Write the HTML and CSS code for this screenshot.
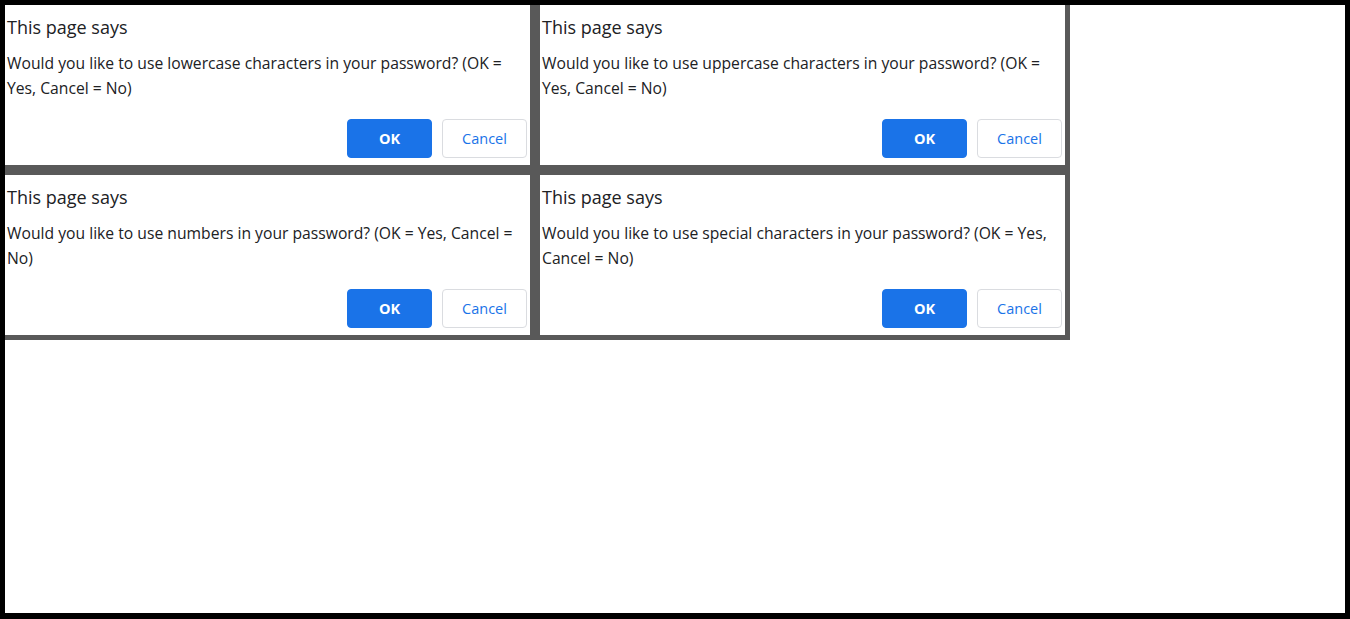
FILE: index.html
```html
<!DOCTYPE html>
<html>
<head>
<meta charset="utf-8">
<link rel="stylesheet" href="styles.css">
</head>
<body>
<div class="grid">
  <div class="dialog">
    <div class="title">This page says</div>
    <div class="msg">Would you like to use lowercase characters in your password? (OK = Yes, Cancel = No)</div>
    <div class="actions"><button class="btn ok">OK</button><button class="btn cancel">Cancel</button></div>
  </div>
  <div class="dialog">
    <div class="title">This page says</div>
    <div class="msg">Would you like to use uppercase characters in your password? (OK = Yes, Cancel = No)</div>
    <div class="actions"><button class="btn ok">OK</button><button class="btn cancel">Cancel</button></div>
  </div>
  <div class="dialog">
    <div class="title">This page says</div>
    <div class="msg">Would you like to use numbers in your password? (OK = Yes, Cancel = No)</div>
    <div class="actions"><button class="btn ok">OK</button><button class="btn cancel">Cancel</button></div>
  </div>
  <div class="dialog">
    <div class="title">This page says</div>
    <div class="msg">Would you like to use special characters in your password? (OK = Yes, Cancel = No)</div>
    <div class="actions"><button class="btn ok">OK</button><button class="btn cancel">Cancel</button></div>
  </div>
</div>
</body>
</html>
```
FILE: styles.css
```css
html, body {
  margin: 0;
  padding: 0;
}
body {
  box-sizing: border-box;
  width: 1350px;
  height: 619px;
  border: 5px solid #000;
  border-bottom-width: 6px;
  background: #fff;
  font-family: "Open Sans", "Noto Sans", sans-serif;
  color: #202124;
}
.grid {
  display: grid;
  grid-template-columns: 525px 525px;
  grid-auto-rows: 160px;
  gap: 10px;
  padding: 0 5px 5px 0;
  width: fit-content;
  background: #595959;
}
.dialog {
  background: #fff;
  display: flex;
  flex-direction: column;
  padding: 8px 3px 7px 2px;
}
.title {
  font-size: 18px;
  line-height: 28px;
}
.msg {
  margin-top: 10px;
  font-size: 15.7px;
  line-height: 25px;
}
.actions {
  margin-top: auto;
  display: flex;
  justify-content: flex-end;
  gap: 10px;
}
.btn {
  width: 85px;
  height: 39px;
  border-radius: 4px;
  font-family: "Open Sans", "Noto Sans", sans-serif;
  font-size: 14.5px;
  cursor: pointer;
}
.ok {
  background: #1a73e8;
  border: 1px solid #1a73e8;
  color: #fff;
  font-weight: 700;
}
.cancel {
  background: #fff;
  border: 1px solid #dadce0;
  color: #1a73e8;
}
```
